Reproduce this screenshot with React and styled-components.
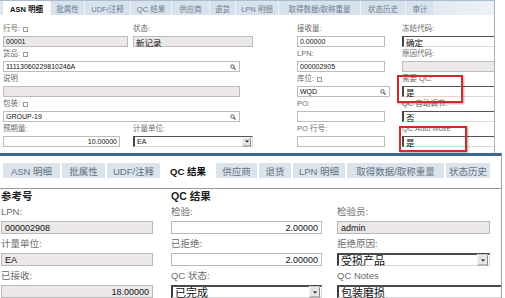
import styled, { createGlobalStyle } from "styled-components";

const Global = createGlobalStyle`
  html, body { margin: 0; padding: 0; background: #fff; }
  body {
    width: 505px;
    height: 298px;
    overflow: hidden;
    font-family: "Liberation Sans", "Noto Sans CJK SC", sans-serif;
  }
`;

const Page = styled.div`
  width: 505px;
  height: 298px;
  overflow: hidden;
`;

/* ---------- top screenshot ---------- */

const TopPanel = styled.div`
  position: relative;
  width: 494px;
  height: 153px;
  border-right: 1px solid #a9b3bd;
  overflow: hidden;
`;

const TopTabs = styled.div`
  display: flex;
  height: 14px;
  padding-left: 3px;
  border-top: 1px solid #a8bdd0;
  background: linear-gradient(to right, #dfe7ef 85%, #eef2f6);
`;

const TopTab = styled.div`
  width: ${(p) => p.$w}px;
  display: flex;
  align-items: center;
  justify-content: center;
  font-size: 7.5px;
  color: ${(p) => (p.$active ? "#111" : "#6d7d8c")};
  font-weight: ${(p) => (p.$active ? "bold" : "normal")};
  background: ${(p) => (p.$active ? "#fff" : "#d8e2ec")};
  border-right: 1px solid #eef3f7;
  white-space: nowrap;
`;

const TopForm = styled.div`
  display: flex;
  flex-direction: column;
  padding: 7px 0 0 3px;
`;

const TopRow = styled.div`
  display: grid;
  grid-template-columns: 130px 164px 105px 1fr;
  height: 25px;
`;

const TopField = styled.div`
  grid-column: ${(p) => p.$col};
  display: flex;
  flex-direction: column;
`;

const TopLabel = styled.div`
  height: 14px;
  line-height: 14px;
  font-size: 7.5px;
  color: #6a6a6a;
  white-space: nowrap;
  display: flex;
  align-items: center;
  gap: 3px;
`;

const Marker = styled.span`
  display: inline-block;
  width: 3px;
  height: 3px;
  border: 1px solid #9a9a9a;
`;

const TopInput = styled.div`
  position: relative;
  box-sizing: border-box;
  width: ${(p) => p.$w}px;
  height: 11px;
  display: flex;
  align-items: center;
  justify-content: ${(p) => (p.$right ? "flex-end" : "flex-start")};
  padding: 0 2px;
  font-size: ${(p) => (p.$big ? 8.5 : 7)}px;
  color: #111;
  background: ${(p) => (p.$gray ? "#ece8e9" : "#fff")};
  border: 1px solid #bcbcbc;
  ${(p) =>
    p.$sunken &&
    `border-top: 1px solid #555; border-left: 2px solid #444;
     border-right-color: #d8d8d8; border-bottom-color: #d8d8d8;`}
  white-space: nowrap;
`;

const SearchIcon = styled.svg`
  position: absolute;
  right: 3px;
  top: 2px;
  width: 6px;
  height: 6px;
`;

const Search = () => (
  <SearchIcon viewBox="0 0 10 10">
    <circle cx="4" cy="4" r="2.8" fill="none" stroke="#444" strokeWidth="1.4" />
    <line x1="6" y1="6" x2="9.3" y2="9.3" stroke="#444" strokeWidth="1.8" />
  </SearchIcon>
);

const DropBtn = styled.span`
  position: absolute;
  right: 1px;
  top: 50%;
  transform: translateY(-50%);
  box-sizing: border-box;
  width: ${(p) => p.$size}px;
  height: ${(p) => p.$size}px;
  background: #e4e4e4;
  border: 1px solid #8c8c8c;
  border-top-color: #f4f4f4;
  border-left-color: #f4f4f4;
  display: flex;
  align-items: center;
  justify-content: center;
  &::after {
    content: "";
    border-left: ${(p) => p.$size / 4}px solid transparent;
    border-right: ${(p) => p.$size / 4}px solid transparent;
    border-top: ${(p) => p.$size / 4}px solid #111;
  }
`;

const Highlight = styled.div`
  position: absolute;
  left: ${(p) => p.$x}px;
  top: ${(p) => p.$y}px;
  width: ${(p) => p.$w}px;
  height: ${(p) => p.$h}px;
  box-sizing: border-box;
  border: 2px solid #d22a2a;
  box-shadow: 1px 1px 2px rgba(0, 0, 0, 0.35);
`;

/* ---------- bottom screenshot ---------- */

const BottomPanel = styled.div`
  width: 501px;
  height: 142px;
  border-top: 3px solid #3b6990;
  border-right: 1px solid #9ea6ad;
  overflow: hidden;
`;

const BottomTabs = styled.div`
  display: flex;
  gap: 2px;
  height: 15px;
  margin-top: 7px;
  padding-left: 3px;
`;

const BottomTab = styled.div`
  width: ${(p) => p.$w}px;
  flex: none;
  display: flex;
  align-items: center;
  justify-content: center;
  font-size: 9.5px;
  color: ${(p) => (p.$active ? "#111" : "#66737f")};
  font-weight: ${(p) => (p.$active ? "bold" : "normal")};
  background: ${(p) => (p.$active ? "#fff" : "#dbe4ed")};
  white-space: nowrap;
`;

const Section = styled.div`
  margin-top: 10px;
  border-top: 1px solid #9a9a9a;
  display: grid;
  grid-template-columns: 170px 166px 1fr;
  padding-left: 1px;
`;

const Column = styled.div`
  display: flex;
  flex-direction: column;
  gap: 4px;
`;

const Heading = styled.div`
  height: 13px;
  line-height: 15px;
  font-size: 10.5px;
  font-weight: bold;
  color: #222;
`;

const BottomField = styled.div`
  display: flex;
  flex-direction: column;
`;

const BottomLabel = styled.div`
  height: 12px;
  line-height: 12px;
  margin-bottom: 3px;
  font-size: 9.5px;
  color: #6b6b6b;
  white-space: nowrap;
`;

const BottomInput = styled.div`
  position: relative;
  box-sizing: border-box;
  width: ${(p) => p.$w}px;
  height: 13px;
  display: flex;
  align-items: center;
  justify-content: ${(p) => (p.$right ? "flex-end" : "flex-start")};
  padding: 0 3px;
  font-size: ${(p) => (p.$big ? 11 : 9)}px;
  color: #111;
  background: ${(p) => (p.$gray ? "#ece8e9" : "#fff")};
  border: 1px solid #b8b8b8;
  ${(p) =>
    p.$sunken &&
    `border-top: 2px solid #4a4a4a; border-left: 2px solid #3c3c3c;
     border-right-color: #d4d4d4; border-bottom-color: #d4d4d4; padding-left: 2px;`}
  white-space: nowrap;
`;

const topTabs = [
  ["ASN 明细", 47, true],
  ["批属性", 33],
  ["UDF/注释", 45],
  ["QC 结果", 40],
  ["供应商", 37],
  ["退货", 25],
  ["LPN 明细", 42],
  ["取得数据/取称重量", 81],
  ["状态历史", 44],
  ["审计", 28],
];

const bottomTabs = [
  ["ASN 明细", 57],
  ["批属性", 43],
  ["UDF/注释", 53],
  ["QC 结果", 52, true],
  ["供应商", 41],
  ["退货", 32],
  ["LPN 明细", 52],
  ["取得数据/取称重量", 97],
  ["状态历史", 44],
];

const TF = ({ col, label, mark, children }) => (
  <TopField $col={col}>
    <TopLabel>
      {label}
      {mark && <Marker />}
    </TopLabel>
    {children}
  </TopField>
);

const BF = ({ label, children }) => (
  <BottomField>
    <BottomLabel>{label}</BottomLabel>
    {children}
  </BottomField>
);

export default function App() {
  return (
    <Page>
      <Global />
      <TopPanel>
        <TopTabs>
          {topTabs.map(([t, w, a]) => (
            <TopTab key={t} $w={w} $active={a}>
              {t}
            </TopTab>
          ))}
        </TopTabs>
        <TopForm>
          <TopRow>
            <TF col="1" label="行号:" mark>
              <TopInput $w={125} $gray>00001</TopInput>
            </TF>
            <TF col="2" label="状态:">
              <TopInput $w={120} $gray $big>新记录</TopInput>
            </TF>
            <TF col="3" label="接收量:">
              <TopInput $w={88}>0.00000</TopInput>
            </TF>
            <TF col="4" label="冻结代码:">
              <TopInput $w={100} $sunken $big>确定</TopInput>
            </TF>
          </TopRow>
          <TopRow>
            <TF col="1 / 3" label="货品:" mark>
              <TopInput $w={237}>
                11113060229810246A
                <Search />
              </TopInput>
            </TF>
            <TF col="3" label="LPN:">
              <TopInput $w={88}>000002905</TopInput>
            </TF>
            <TF col="4" label="原因代码:">
              <TopInput $w={100} $gray />
            </TF>
          </TopRow>
          <TopRow>
            <TF col="1 / 3" label="说明">
              <TopInput $w={237} $gray />
            </TF>
            <TF col="3" label="库位:" mark>
              <TopInput $w={93}>
                WQD
                <Search />
              </TopInput>
            </TF>
            <TF col="4" label="需要 QC:">
              <TopInput $w={100} $sunken $big>是</TopInput>
            </TF>
          </TopRow>
          <TopRow>
            <TF col="1 / 3" label="包装:" mark>
              <TopInput $w={237}>
                GROUP-19
                <Search />
              </TopInput>
            </TF>
            <TF col="3" label="PO:">
              <TopInput $w={88} />
            </TF>
            <TF col="4" label="QC 自动调节:">
              <TopInput $w={100} $sunken $big>否</TopInput>
            </TF>
          </TopRow>
          <TopRow>
            <TF col="1" label="预期量:">
              <TopInput $w={117} $right>10.00000</TopInput>
            </TF>
            <TF col="2" label="计量单位:">
              <TopInput $w={120} $sunken>
                EA
                <DropBtn $size={9} />
              </TopInput>
            </TF>
            <TF col="3" label="PO 行号:">
              <TopInput $w={88} />
            </TF>
            <TF col="4" label="QC Auto Move">
              <TopInput $w={100} $sunken $big>是</TopInput>
            </TF>
          </TopRow>
        </TopForm>
        <Highlight $x={397} $y={75} $w={66} $h={28} />
        <Highlight $x={399} $y={126} $w={68} $h={26} />
      </TopPanel>

      <BottomPanel>
        <BottomTabs>
          {bottomTabs.map(([t, w, a]) => (
            <BottomTab key={t} $w={w} $active={a}>
              {t}
            </BottomTab>
          ))}
        </BottomTabs>
        <Section>
          <Column>
            <Heading>参考号</Heading>
            <BF label="LPN:">
              <BottomInput $w={152} $gray>000002908</BottomInput>
            </BF>
            <BF label="计量单位:">
              <BottomInput $w={152} $gray>EA</BottomInput>
            </BF>
            <BF label="已接收:">
              <BottomInput $w={152} $gray $right>18.00000</BottomInput>
            </BF>
          </Column>
          <Column>
            <Heading>QC 结果</Heading>
            <BF label="检验:">
              <BottomInput $w={151} $right>2.00000</BottomInput>
            </BF>
            <BF label="已拒绝:">
              <BottomInput $w={151} $right>2.00000</BottomInput>
            </BF>
            <BF label="QC 状态:">
              <BottomInput $w={151} $sunken $big>
                已完成
                <DropBtn $size={11} />
              </BottomInput>
            </BF>
          </Column>
          <Column>
            <Heading />
            <BF label="检验员:">
              <BottomInput $w={153} $gray>admin</BottomInput>
            </BF>
            <BF label="拒绝原因:">
              <BottomInput $w={153} $sunken $big>
                受损产品
                <DropBtn $size={11} />
              </BottomInput>
            </BF>
            <BF label="QC Notes">
              <BottomInput $w={175} $sunken $big>包装磨损</BottomInput>
            </BF>
          </Column>
        </Section>
      </BottomPanel>
    </Page>
  );
}
